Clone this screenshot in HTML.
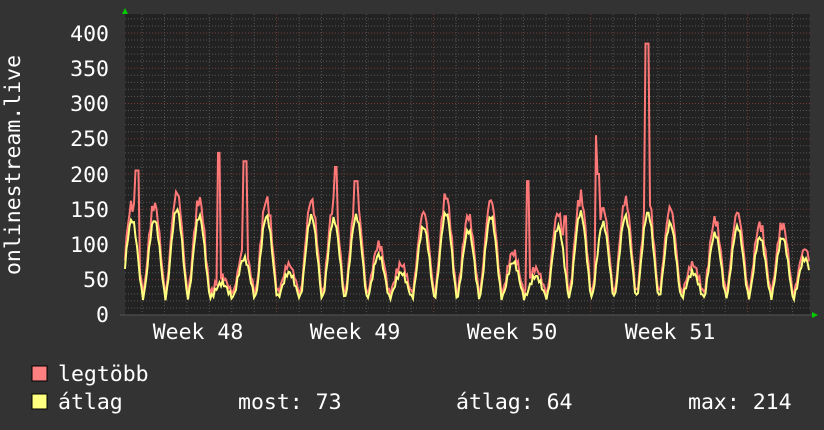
<!DOCTYPE html>
<html><head><meta charset="utf-8"><style>
body{margin:0;background:#333;width:824px;height:430px;overflow:hidden;font-family:"DejaVu Sans Mono","Liberation Mono",monospace;color:#fff}
</style></head><body>
<svg id="s" width="824" height="430" xmlns="http://www.w3.org/2000/svg" style="position:absolute;left:0;top:0">
<rect width="824" height="430" fill="#333"/>
<rect x="125" y="14" width="685" height="301" fill="#222"/>
<g id="grid"></g>
<path id="mx" fill="none" stroke="#ff7878" stroke-width="2"/>
<path id="av" fill="none" stroke="#ffff80" stroke-width="2"/>
<line x1="120" y1="315" x2="812" y2="315" stroke="#555" stroke-width="1"/>
<polygon points="122,14 128,14 125,8" fill="#0c0"/>
<polygon points="812,312 812,318 818,315" fill="#0c0"/>
<g font-family="DejaVu Sans Mono, Liberation Mono, monospace" font-size="21.5" fill="#fff" text-anchor="end">
<text x="109" y="41">400</text><text x="109" y="76">350</text><text x="109" y="111">300</text>
<text x="109" y="146">250</text><text x="109" y="182">200</text><text x="109" y="217">150</text>
<text x="109" y="252">100</text><text x="109" y="287">50</text><text x="109" y="322">0</text>
</g>
<g font-family="DejaVu Sans Mono, Liberation Mono, monospace" font-size="21.5" fill="#fff" text-anchor="middle">
<text x="198" y="339">Week 48</text><text x="355" y="339">Week 49</text>
<text x="512" y="339">Week 50</text><text x="670" y="339">Week 51</text>
</g>
<text transform="translate(20,165) rotate(-90)" font-family="DejaVu Sans Mono, Liberation Mono, monospace" font-size="21.5" fill="#fff" text-anchor="middle">onlinestream.live</text>
<rect x="32" y="366" width="15" height="15" fill="#ff8080" stroke="#000"/>
<rect x="32" y="394" width="15" height="15" fill="#ffff80" stroke="#000"/>
<g font-family="DejaVu Sans Mono, Liberation Mono, monospace" font-size="21.5" fill="#fff">
<text x="58" y="381">legtöbb</text>
<text x="58" y="409">átlag</text>
<text x="238" y="409">most: 73</text>
<text x="456" y="409">átlag: 64</text>
<text x="688" y="409">max: 214</text>
</g>
</svg>
<script>
var g=document.getElementById('grid'),h='';
function Y(v){return 315-v*0.705;}
for(var v=10;v<=420;v+=10){var y=Y(v);if(y<14)break;var maj=v%50==0;
h+='<line x1="125" x2="810" y1="'+y+'" y2="'+y+'" stroke="'+(maj?'#7a3a3a':'#555')+'" stroke-dasharray="1,2"/>';}
for(var i=0;i<31;i++){var x=119.6+i*22.43;if(x<126)continue;var maj=(i%7==0);
h+='<line y1="14" y2="315" x1="'+x+'" x2="'+x+'" stroke="'+(maj?'#7a3a3a':'#555')+'" stroke-dasharray="1,2"/>';}
g.innerHTML=h;
var pk=[135,135,150,140,45,80,140,60,140,135,140,85,60,125,145,120,140,75,55,125,145,130,140,145,130,60,115,125,110,110,80];
var spikes={137:205,219:230,245:218,336:210,356:190,597:255,647:385,528:190,598:200,565:140};
var sp=22.43,x0=119.6,mp='',ap='';
for(var x=125;x<=809;x+=1.5){var t=(x-x0)/sp,d=Math.floor(t),f=t-d;
var p=pk[Math.min(Math.max(d,0),30)];var s=Math.sin(Math.PI*(f-0.05));s=s>0?Math.pow(s,1.6):0;
var a=25+(p-25)*s+4*Math.sin(x*1.7);
var m=a*(1.08+0.1*Math.abs(Math.sin(x*0.9)))+3;
for(var k in spikes){if(Math.abs(x-k)<1.6)m=spikes[k];}
mp+=(mp?' L':'M')+x.toFixed(1)+' '+Y(m).toFixed(1);ap+=(ap?' L':'M')+x.toFixed(1)+' '+Y(a).toFixed(1);}
document.getElementById('mx').setAttribute('d',mp);document.getElementById('av').setAttribute('d',ap);
</script>
</body></html>
